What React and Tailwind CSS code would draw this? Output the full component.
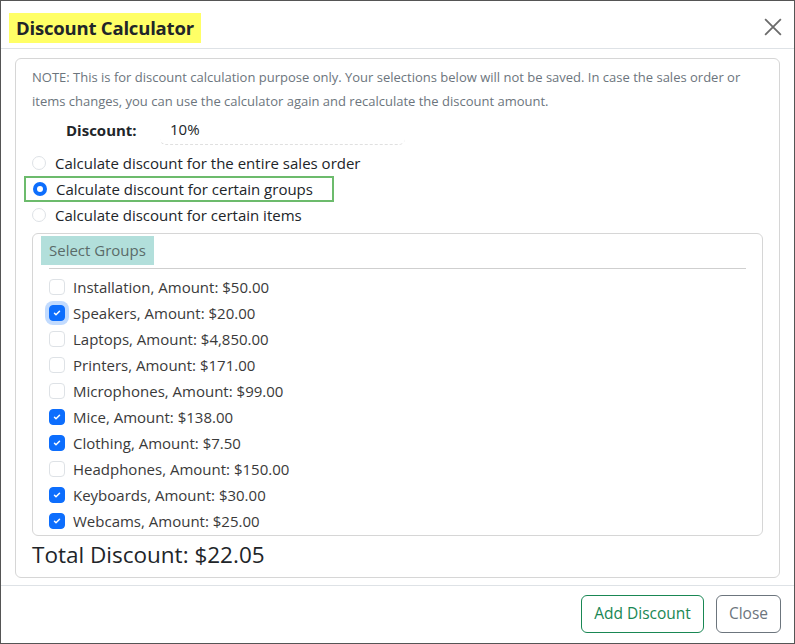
import { useState } from "react";

const groups = [
  { name: "Installation", amount: "$50.00", checked: false },
  { name: "Speakers", amount: "$20.00", checked: true, focus: true },
  { name: "Laptops", amount: "$4,850.00", checked: false },
  { name: "Printers", amount: "$171.00", checked: false },
  { name: "Microphones", amount: "$99.00", checked: false },
  { name: "Mice", amount: "$138.00", checked: true },
  { name: "Clothing", amount: "$7.50", checked: true },
  { name: "Headphones", amount: "$150.00", checked: false },
  { name: "Keyboards", amount: "$30.00", checked: true },
  { name: "Webcams", amount: "$25.00", checked: true },
];

const options = [
  "Calculate discount for the entire sales order",
  "Calculate discount for certain groups",
  "Calculate discount for certain items",
];

const Check = ({ on, focus }) => (
  <span
    className={
      "w-4 h-4 rounded-[4px] flex items-center justify-center shrink-0 " +
      (on ? "bg-[#0d6efd] border border-[#0d6efd] " : "bg-white border border-[#dee2e6] ") +
      (focus ? "ring-4 ring-[#c2dbfe]" : "")
    }
  >
    {on && (
      <svg width="10" height="10" viewBox="0 0 20 20">
        <path d="M5 10.5l3 3 7-7" fill="none" stroke="#fff" strokeWidth="3" strokeLinecap="round" strokeLinejoin="round" />
      </svg>
    )}
  </span>
);

const App = () => {
  const [choice, setChoice] = useState(1);
  const [items, setItems] = useState(groups);

  return (
    <div className="w-[795px] h-[644px] border border-[#555] bg-white flex flex-col text-[#212529]" style={{ fontFamily: "'Open Sans', 'Noto Sans', sans-serif" }}>
      {/* header */}
      <div className="h-[48px] shrink-0 border-b border-[#dee2e6] flex items-center justify-between pl-[8px] pr-[12px]">
        <div className="bg-[#ffff66] h-[30px] px-[7px] flex items-center text-[18.5px] font-bold mt-[6px] tracking-[-0.2px]">Discount Calculator</div>
        <svg width="18" height="18" viewBox="0 0 16 16" className="mt-[4px]">
          <path d="M1 1l14 14M15 1L1 15" stroke="#6b6b6b" strokeWidth="1.6" fill="none" />
        </svg>
      </div>

      {/* body */}
      <div className="px-[14px] pt-[9px]">
        <div className="border border-[#d6d6d6] rounded-[6px] pl-[16px] pr-[16px] pt-[6px] pb-[4px]">
          <p className="text-[13px] leading-[24px] text-[#6c757d]">
            NOTE: This is for discount calculation purpose only. Your selections below will not be saved. In case the sales order or items changes, you can use the calculator again and recalculate the discount amount.
          </p>
          <div className="flex items-center h-[30px] mt-[2px]">
            <span className="w-[128px] pl-[34px] font-bold text-[15px]">Discount:</span>
            <span className="w-[245px] h-[30px] flex items-center text-[15px] pl-[10px] border-b border-dashed border-[#e0e0e0] rounded-b-[6px]">10%</span>
          </div>
          <div className="mt-[5px] flex flex-col">
            {options.map((o, i) => (
              <label
                key={o}
                onClick={() => setChoice(i)}
                className={
                  "flex items-center gap-[9px] h-[26px] text-[15px] cursor-pointer " +
                  (i === 1 ? "border-2 border-[#6cbb6c] -ml-[8px] pl-[7px] w-[310px]" : "")
                }
              >
                {choice === i ? (
                  <span className="w-[14px] h-[14px] rounded-full bg-[#0d6efd] flex items-center justify-center shrink-0">
                    <span className="w-[6px] h-[6px] rounded-full bg-white" />
                  </span>
                ) : (
                  <span className="w-[14px] h-[14px] rounded-full border border-[#dee2e6] bg-white shrink-0" />
                )}
                {o}
              </label>
            ))}
          </div>

          <div className="mt-[5px] border border-[#d6d6d6] rounded-[6px] pl-[8px] pr-[16px] pt-[2px] pb-[1px]">
            <div className="bg-[#b2dfdb] text-[#5a6b69] text-[15px] inline-flex items-center h-[29px] px-[8px]">Select Groups</div>
            <div className="ml-[8px] mt-[3px] border-t border-[#cfcfcf]" />
            <div className="flex flex-col pl-[8px] pt-[5px]">
              {items.map((g, i) => (
                <label
                  key={g.name}
                  className="flex items-center gap-[8px] h-[26px] text-[15px] text-[#3a3a3a] cursor-pointer"
                  onClick={() =>
                    setItems(items.map((x, j) => (j === i ? { ...x, checked: !x.checked } : x)))
                  }
                >
                  <Check on={g.checked} focus={g.focus} />
                  {g.name}, Amount: {g.amount}
                </label>
              ))}
            </div>
          </div>

          <div className="text-[22.5px] leading-[36px] mt-[1px]">Total Discount: $22.05</div>
        </div>
      </div>

      {/* footer */}
      <div className="mt-[7px] border-t border-[#dee2e6] flex justify-end gap-[12px] px-[13px] pt-[9px]">
        <button className="h-[38px] px-[12px] border border-[#198754] text-[#198754] rounded-[6px] text-[15.5px]">Add Discount</button>
        <button className="h-[38px] px-[12px] border border-[#6c757d] text-[#6c757d] rounded-[6px] text-[15.5px]">Close</button>
      </div>
    </div>
  );
};

export default App;
